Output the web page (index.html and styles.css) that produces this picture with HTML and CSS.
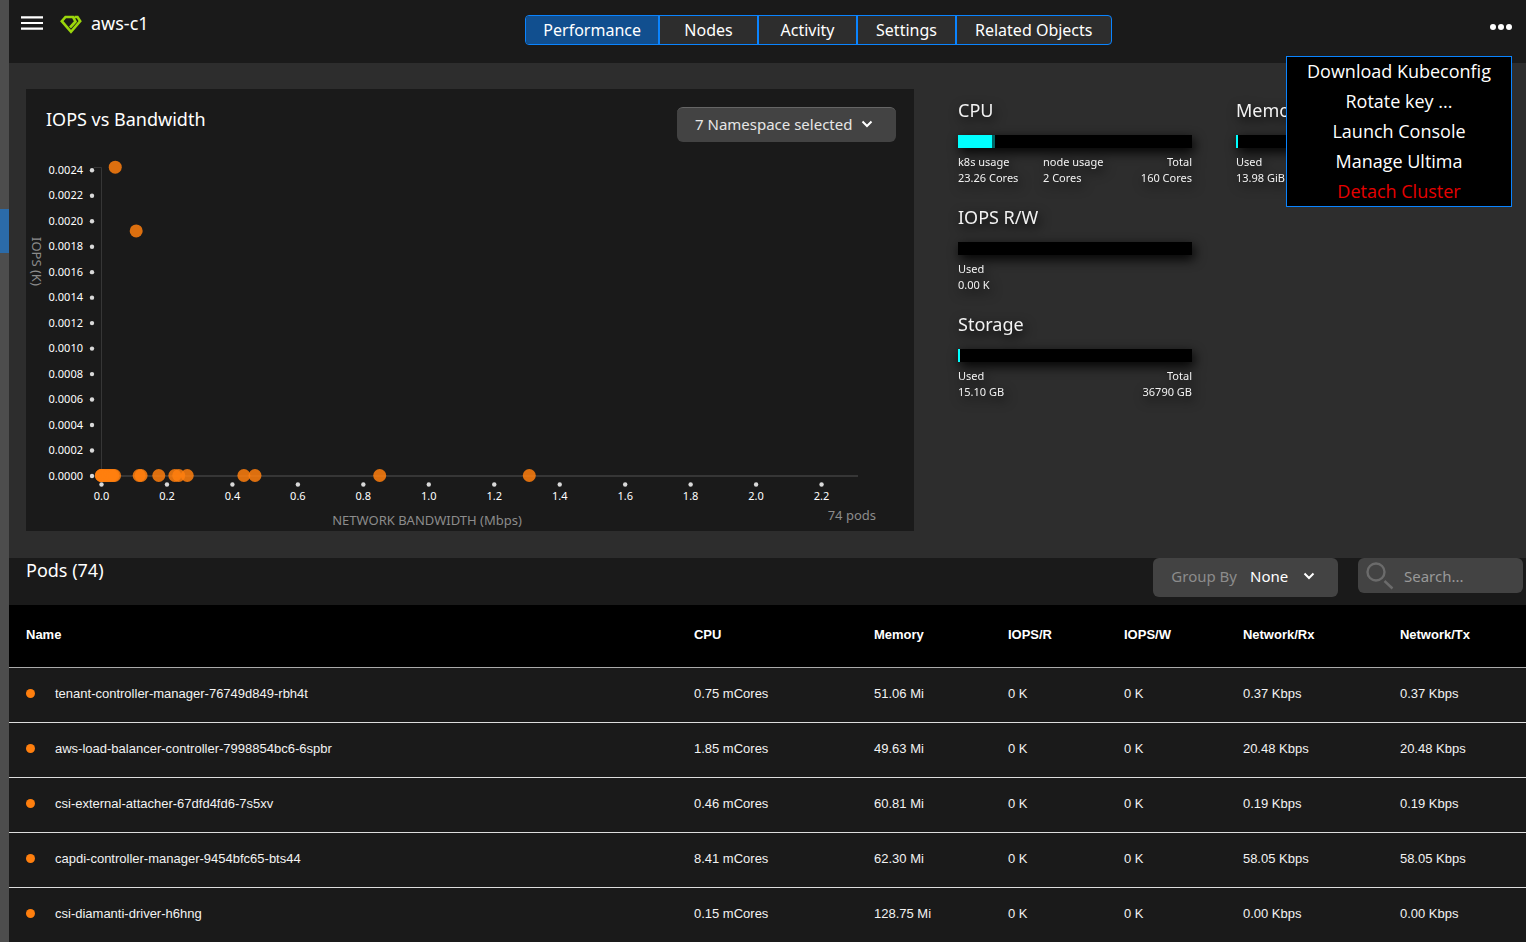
FILE: index.html
```html
<!DOCTYPE html>
<html lang="en">
<head>
    <meta charset="UTF-8">
    <meta name="viewport" content="width=device-width, initial-scale=1.0">
    <title>aws-c1 - Performance</title>
    <link rel="stylesheet" href="styles.css">
</head>
<body>
    <aside class="rail">
        <div class="rail-active"></div>
    </aside>
    <main class="page">
        <header class="topbar">
            <div class="brand">
                <button type="button" class="icon-btn" aria-label="Open navigation">
                    <svg width="22" height="16" viewBox="0 0 22 16">
                        <path d="M0 2.3h22M0 8h22M0 13.7h22" stroke="#fff" stroke-width="2.2"/>
                    </svg>
                </button>
                <svg class="logo" width="22" height="20" viewBox="0 0 22 20" fill="none" stroke="#9bd60c" stroke-width="2.6">
                    <path d="M10 12.5 15.5 6.5 13 2H5.5L1.8 6.2 11 16.8 20.2 6.2 17.5 2H14.5"/>
                </svg>
                <h1 class="cluster-name">aws-c1</h1>
            </div>
            <nav class="tabs">
                <a href="#performance" class="tab active">Performance</a>
                <a href="#nodes" class="tab">Nodes</a>
                <a href="#activity" class="tab">Activity</a>
                <a href="#settings" class="tab">Settings</a>
                <a href="#related" class="tab tab-last">Related Objects</a>
            </nav>
            <div class="actions">
                <button type="button" class="icon-btn" aria-label="More actions">
                    <svg width="22" height="6" viewBox="0 0 22 6" fill="#fff">
                        <circle cx="3" cy="3" r="3"/>
                        <circle cx="11" cy="3" r="3"/>
                        <circle cx="19" cy="3" r="3"/>
                    </svg>
                </button>
                <div class="menu">
                    <button type="button" class="menu-item">Download Kubeconfig</button>
                    <button type="button" class="menu-item">Rotate key ...</button>
                    <button type="button" class="menu-item">Launch Console</button>
                    <button type="button" class="menu-item">Manage Ultima</button>
                    <button type="button" class="menu-item danger">Detach Cluster</button>
                </div>
            </div>
        </header>

        <section class="overview">
            <div class="chart-panel">
                <div class="chart-head">
                    <h2>IOPS vs Bandwidth</h2>
                    <div class="select-box namespace-box">
                        <select aria-label="Namespace">
                            <option>7 Namespace selected</option>
                        </select>
                        <svg class="chevron" width="12" height="8" viewBox="0 0 12 8"><path d="M1.5 1.5 6 6l4.5-4.5"/></svg>
                    </div>
                </div>
                <svg class="chart" id="chart" viewBox="0 0 888 389">
                    <path class="axis" d="M68 25.5h7.5v308"/>
                    <path class="axis axis-x" d="M67 334h765"/>
                    <g id="ticks"></g>
                    <g id="points"></g>
                    <text class="axis-label" transform="translate(6 95) rotate(90)">IOPS (K)</text>
                    <text class="axis-label" x="401" y="383" text-anchor="middle">NETWORK BANDWIDTH (Mbps)</text>
                    <text class="axis-label" x="850" y="378" text-anchor="end">74 pods</text>
                </svg>
            </div>

            <div class="stats">
                <div class="stat">
                    <h3>CPU</h3>
                    <div class="bar"><span class="fill" style="width: 14.5%"></span><span class="fill-node" style="width: 1.3%"></span></div>
                    <div class="legend">
                        <p>k8s usage<br>23.26 Cores</p>
                        <p>node usage<br>2 Cores</p>
                        <p class="total">Total<br>160 Cores</p>
                    </div>
                </div>
                <div class="stat">
                    <h3>Memory</h3>
                    <div class="bar"><span class="fill" style="width: 1%"></span></div>
                    <div class="legend">
                        <p>Used<br>13.98 GiB</p>
                    </div>
                </div>
                <div class="stat stat-left">
                    <h3>IOPS R/W</h3>
                    <div class="bar"></div>
                    <div class="legend">
                        <p>Used<br>0.00 K</p>
                    </div>
                </div>
                <div class="stat stat-left">
                    <h3>Storage</h3>
                    <div class="bar"><span class="fill" style="width: 1%"></span></div>
                    <div class="legend">
                        <p>Used<br>15.10 GB</p>
                        <p class="total">Total<br>36790 GB</p>
                    </div>
                </div>
            </div>
        </section>

        <section class="pods">
            <div class="pods-head">
                <h2>Pods (74)</h2>
                <div class="select-box group-box">
                    <label for="groupBy">Group By</label>
                    <select id="groupBy">
                        <option>None</option>
                    </select>
                    <svg class="chevron" width="12" height="8" viewBox="0 0 12 8"><path d="M1.5 1.5 6 6l4.5-4.5"/></svg>
                </div>
                <div class="search-box">
                    <svg width="28" height="28" viewBox="0 0 28 28" fill="none" stroke="#6b6b6b" stroke-width="2.4">
                        <circle cx="10" cy="10" r="8.5"/>
                        <path d="M18.5 19l8 7.5"/>
                    </svg>
                    <input type="text" placeholder="Search..." aria-label="Search pods">
                </div>
            </div>
            <table class="pods-table">
                <colgroup>
                    <col class="col-name">
                    <col class="col-cpu">
                    <col class="col-memory">
                    <col class="col-read">
                    <col class="col-write">
                    <col class="col-rx">
                    <col class="col-tx">
                </colgroup>
                <thead>
                    <tr>
                        <th>Name</th>
                        <th>CPU</th>
                        <th>Memory</th>
                        <th>IOPS/R</th>
                        <th>IOPS/W</th>
                        <th>Network/Rx</th>
                        <th>Network/Tx</th>
                    </tr>
                </thead>
                <tbody>
                    <tr>
                        <td><span class="dot"></span>tenant-controller-manager-76749d849-rbh4t</td>
                        <td>0.75 mCores</td>
                        <td>51.06 Mi</td>
                        <td>0 K</td>
                        <td>0 K</td>
                        <td>0.37 Kbps</td>
                        <td>0.37 Kbps</td>
                    </tr>
                    <tr>
                        <td><span class="dot"></span>aws-load-balancer-controller-7998854bc6-6spbr</td>
                        <td>1.85 mCores</td>
                        <td>49.63 Mi</td>
                        <td>0 K</td>
                        <td>0 K</td>
                        <td>20.48 Kbps</td>
                        <td>20.48 Kbps</td>
                    </tr>
                    <tr>
                        <td><span class="dot"></span>csi-external-attacher-67dfd4fd6-7s5xv</td>
                        <td>0.46 mCores</td>
                        <td>60.81 Mi</td>
                        <td>0 K</td>
                        <td>0 K</td>
                        <td>0.19 Kbps</td>
                        <td>0.19 Kbps</td>
                    </tr>
                    <tr>
                        <td><span class="dot"></span>capdi-controller-manager-9454bfc65-bts44</td>
                        <td>8.41 mCores</td>
                        <td>62.30 Mi</td>
                        <td>0 K</td>
                        <td>0 K</td>
                        <td>58.05 Kbps</td>
                        <td>58.05 Kbps</td>
                    </tr>
                    <tr>
                        <td><span class="dot"></span>csi-diamanti-driver-h6hng</td>
                        <td>0.15 mCores</td>
                        <td>128.75 Mi</td>
                        <td>0 K</td>
                        <td>0 K</td>
                        <td>0.00 Kbps</td>
                        <td>0.00 Kbps</td>
                    </tr>
                </tbody>
            </table>
        </section>
    </main>
    <script src="chart.js"></script>
</body>
</html>
```

FILE: styles.css
```css
* {
    box-sizing: border-box;
}
body {
    margin: 0;
    min-height: 100vh;
    display: flex;
    background-color: #1a1a1a;
    color: #fff;
    font-family: "Noto Sans", "Open Sans", sans-serif;
    font-size: 16px;
}
h1, h2, h3, p {
    margin: 0;
    font-weight: normal;
}
h2, h3 {
    font-size: 18px;
    line-height: 24px;
}
button, input, select {
    font-family: inherit;
    font-size: inherit;
    color: inherit;
    background: none;
    border: none;
    padding: 0;
}
.rail {
    flex: 0 0 9px;
    padding-top: 209px;
    background-color: #4d4d4d;
}
.rail-active {
    height: 44px;
    background-color: #2b6ba9;
}
.page {
    flex: 1;
    min-width: 0;
}

/* Top bar */
.topbar {
    display: flex;
    align-items: flex-start;
    height: 63px;
    padding-top: 15px;
}
.brand {
    flex: 505 1 0;
    display: flex;
    align-items: flex-start;
    padding-left: 12px;
}
.icon-btn {
    display: block;
    cursor: pointer;
}
.icon-btn svg, .logo {
    display: block;
}
.logo {
    margin: 0 9px 0 17px;
}
.cluster-name {
    font-size: 18px;
    line-height: 16px;
}
.tabs {
    display: flex;
    border: 1px solid #0a84ff;
    border-radius: 4px;
    background-color: #2d2d2d;
    overflow: hidden;
}
.tab {
    min-width: 99px;
    padding: 0 17px;
    border-right: 2px solid #0a84ff;
    color: #fff;
    line-height: 28px;
    text-align: center;
    text-decoration: none;
}
.tab.active {
    background-color: #114f8f;
}
.tab-last {
    padding: 0 18px;
    border-right: none;
}
.actions {
    flex: 401 1 0;
    position: relative;
    display: flex;
    justify-content: flex-end;
    align-items: flex-start;
    padding: 9px 14px 0 0;
}
.menu {
    position: absolute;
    top: 41px;
    right: 14px;
    z-index: 2;
    width: 226px;
    display: flex;
    flex-direction: column;
    gap: 1px;
    border: 1px solid #0a84ff;
    background-color: #000;
    font-family: "Open Sans", "Noto Sans", sans-serif;
}
.menu-item {
    font-size: 18px;
    line-height: 29px;
    text-align: center;
    cursor: pointer;
}
.menu-item.danger {
    color: #e60000;
}

/* Overview */
.overview {
    display: grid;
    grid-template-columns: 888fr 551fr;
    gap: 44px;
    padding: 26px 17px 27px;
    background-color: #2d2d2d;
}
.chart-panel {
    background-color: #1a1a1a;
}
.chart-head {
    display: flex;
    justify-content: space-between;
    padding: 18px 18px 0 20px;
}
.select-box {
    display: flex;
    align-items: center;
    border-radius: 6px;
    background-color: #434343;
    font-size: 15px;
}
.select-box select {
    appearance: none;
    cursor: pointer;
}
.namespace-box {
    height: 35px;
    gap: 8px;
    padding: 0 23px 2px 18px;
    border-top: 1px solid #666;
    color: #e6e6e6;
}
.chevron {
    fill: none;
    stroke: #fff;
    stroke-width: 2;
}
.chart {
    display: block;
    width: 100%;
}
.axis {
    fill: none;
    stroke: #363636;
}
.axis-x {
    stroke-width: 2;
}
.tick-dot {
    fill: #d9d9d9;
}
.tick-label {
    fill: #fff;
    font-size: 11px;
}
.axis-label {
    fill: #8c8c8c;
    font-size: 13px;
}
.point {
    fill: #ff7f0e;
    fill-opacity: 0.85;
}
.stats {
    display: grid;
    grid-template-columns: 1fr 1fr;
    align-content: start;
    gap: 19px 44px;
    padding: 9px 39px 0 0;
}
.stat {
    color: #f2f2f2;
    filter: drop-shadow(2px 4px 6px #000);
}
.stat-left {
    grid-column: 1;
}
.bar {
    display: flex;
    height: 13px;
    margin: 13px 0 6px;
    background-color: #000;
}
.fill {
    background-color: #00ffff;
}
.fill-node {
    background-color: #006666;
}
.legend {
    display: grid;
    grid-template-columns: 85fr 85fr 64fr;
    font-size: 11px;
    line-height: 16px;
    white-space: nowrap;
}
.total {
    grid-column: 3;
    text-align: right;
}

/* Pods */
.pods-head {
    display: flex;
    align-items: flex-start;
    height: 47px;
    padding: 0 3px 0 17px;
}
.pods-head h2 {
    flex: 1;
}
.group-box {
    height: 39px;
    padding: 0 23px 4px 18px;
    margin-right: 20px;
}
.group-box label {
    margin-right: 13px;
    color: #8c8c8c;
}
.group-box select {
    margin-right: 14px;
}
.search-box {
    display: flex;
    align-items: center;
    width: 165px;
    height: 35px;
    padding: 0 8px;
    border-radius: 6px;
    background-color: #434343;
    font-size: 15px;
}
.search-box input {
    flex: 1;
    min-width: 0;
    margin-left: 10px;
}
.search-box input::placeholder {
    color: #999;
}
.pods-table {
    width: 100%;
    table-layout: fixed;
    border-collapse: separate;
    border-spacing: 0;
    font-family: "Liberation Sans", Arial, sans-serif;
    font-size: 13px;
}
.col-name {
    width: 44.03%;
}
.col-cpu {
    width: 11.87%;
}
.col-memory {
    width: 8.83%;
}
.col-read {
    width: 7.65%;
}
.col-write {
    width: 7.84%;
}
.col-rx {
    width: 10.35%;
}
.col-tx {
    width: 9.43%;
}
.pods-table th, .pods-table td {
    padding: 0 17px;
    text-align: left;
    white-space: nowrap;
    border-bottom: 1px solid #ddd;
}
.pods-table th {
    height: 63px;
    padding-bottom: 4px;
    background-color: #000;
    border-bottom-color: #aaa;
}
.pods-table td {
    height: 55px;
    padding-bottom: 4px;
    color: #f2f2f2;
}
.pods-table tbody tr:last-child td {
    border-bottom-color: #111;
}
.dot {
    display: inline-block;
    width: 9px;
    height: 9px;
    margin-right: 20px;
    border-radius: 50%;
    background-color: #ff7f0e;
}
```

FILE: chart.js
```js
// Plot origin and scale inside the 888x389 chart
const originX = 75.5;
const originY = 333.5;
const pxPerMbps = 327.3;
const pxPerKiops = 127400;

function add(parent, name, attrs, text) {
    const el = document.createElementNS('http://www.w3.org/2000/svg', name);
    for (const key in attrs) {
        el.setAttribute(key, attrs[key]);
    }
    if (text) {
        el.textContent = text;
    }
    document.getElementById(parent).appendChild(el);
}

for (let i = 0; i <= 12; i++) {
    const y = originY - i * 0.0002 * pxPerKiops;
    add('ticks', 'circle', { class: 'tick-dot', cx: 66, cy: y + 0.5, r: 2.2 });
    add('ticks', 'text', { class: 'tick-label', x: 57, y: y + 4, 'text-anchor': 'end' }, (i * 0.0002).toFixed(4));
}

for (let i = 0; i <= 11; i++) {
    const x = originX + i * 0.2 * pxPerMbps;
    add('ticks', 'circle', { class: 'tick-dot', cx: x, cy: originY + 9, r: 2.2 });
    add('ticks', 'text', { class: 'tick-label', x: x, y: originY + 24, 'text-anchor': 'middle' }, (i * 0.2).toFixed(1));
}

// [bandwidth in Mbps, IOPS in K]
const pods = [
    [0.042, 0.00242], [0.106, 0.00192],
    [0, 0], [0, 0], [0, 0], [0.005, 0], [0.01, 0], [0.015, 0], [0.02, 0], [0.025, 0], [0.03, 0], [0.035, 0], [0.04, 0],
    [0.115, 0], [0.121, 0], [0.175, 0], [0.224, 0], [0.236, 0], [0.262, 0],
    [0.435, 0], [0.469, 0], [0.85, 0], [1.307, 0]
];

pods.forEach(([bandwidth, iops]) => {
    add('points', 'circle', {
        class: 'point',
        cx: originX + bandwidth * pxPerMbps,
        cy: originY - iops * pxPerKiops,
        r: 6.5
    });
});
```
